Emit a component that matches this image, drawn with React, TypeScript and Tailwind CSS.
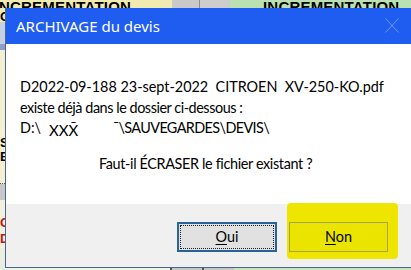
import React from "react";

const ui = { fontFamily: '"Noto Sans", "Open Sans", sans-serif' };
const body = { fontFamily: 'Lato, "Noto Sans", sans-serif' };
const bg = { fontFamily: '"Liberation Sans", Arial, sans-serif' };

export default function App() {
  return (
    <div className="relative w-[411px] h-[270px] overflow-hidden bg-[#eef0e6]" style={bg}>
      {/* background application (behind the dialog) */}
      <div className="flex h-[8px] overflow-hidden">
        <div className="w-[172px] bg-[#f1ebb2] flex items-end overflow-hidden">
          <span className="text-[15px] font-bold leading-none text-black -ml-[1px] mb-[-6px] tracking-[0.2px]">NCREMENTATION</span>
        </div>
        <div className="w-[28px] bg-[#c9c9c9] border-r border-[#8d8d8d]" />
        <div className="w-[30px] bg-[#cdcdcd]" />
        <div className="flex-1 bg-[#b9e1b2] flex items-end overflow-hidden pl-[33px]">
          <span className="text-[15px] font-bold leading-none text-black mb-[-6px] whitespace-nowrap tracking-[0.2px]">INCREMENTATION</span>
        </div>
      </div>
      <div className="flex h-[262px]">
        <div className="w-[5px] flex flex-col overflow-hidden text-[13px] font-bold leading-none">
          <div className="h-[14px] bg-[#f1ebb2] pt-[2px] text-black">C</div>
          <div className="h-[22px] bg-[#c4d0e4]" />
          <div className="h-[6px] bg-[#8aa0c8]" />
          <div className="h-[86px] bg-[#f3efcf]" />
          <div className="h-[14px] bg-[#f3efcf] text-black">S</div>
          <div className="h-[14px] bg-[#f3efcf] text-black">E</div>
          <div className="h-[20px] bg-[#f3efcf] border-b border-dotted border-[#555]" />
          <div className="h-[16px] bg-[#c8c8c8]" />
          <div className="h-[16px] bg-[#f3f0e0]" />
          <div className="h-[16px] bg-[#f3f0e0] text-[#c01818]">C</div>
          <div className="h-[16px] bg-[#f3f0e0] text-[#c01818]">D</div>
          <div className="flex-1 bg-[#e8efe0]" />
        </div>
        <div className="flex-1 flex flex-col">
          <div className="flex-1" />
          <div className="h-[3px] flex">
            <div className="w-[165px] bg-[#eef2e8]" />
            <div className="w-[2px] bg-[#555]" />
            <div className="w-[30px] bg-[#c6c6c6]" />
            <div className="w-[2px] bg-[#555]" />
            <div className="w-[30px] bg-[#c6c6c6]" />
            <div className="flex-1 bg-[#c8e4c0]" />
          </div>
        </div>
      </div>

      {/* dialog window */}
      <div
        className="absolute left-[5px] top-[8px] w-[420px] h-[260px] flex flex-col border-l border-b border-[#4a6590] bg-white"
        style={ui}
      >
        <div className="h-[36px] bg-[#1f5cf0] flex items-center pl-[10px] relative shrink-0">
          <span className="text-white text-[15px] leading-none">ARCHIVAGE du devis</span>
          <svg className="absolute left-[379px] top-[10px]" width="14" height="15" viewBox="0 0 14 15">
            <path d="M0.5 0.5 L13.5 14.5 M13.5 0.5 L0.5 14.5" stroke="#6f98f2" strokeWidth="1" fill="none" />
          </svg>
        </div>
        <div className="h-[160px] bg-white text-[14.4px] text-black leading-[20.5px] pl-[14px] pt-[33px] shrink-0" style={body}>
          <div className="whitespace-pre">D2022-09-188 23-sept-2022  CITROEN  XV-250-KO.pdf</div>
          <div className="whitespace-pre tracking-[-0.45px]">existe déjà dans le dossier ci-dessous :</div>
          <div className="flex items-end whitespace-pre">
            <span>D:\</span>
            <span className="ml-[8px] text-[15px] translate-y-[2px]">XXX̄</span>
            <span className="ml-[35px] tracking-[-0.6px]">¯\SAUVEGARDES\DEVIS\</span>
          </div>
          <div className="mt-[15px] pl-[79px] tracking-[-0.35px]">Faut-il ÉCRASER le fichier existant ?</div>
        </div>
        <div className="flex-1 bg-[#f0f0f0] flex items-start pt-[18px] pl-[171px] gap-[12px]" style={body}>
          <button className="w-[100px] h-[30px] border-2 border-[#27649a] bg-[#e1e1e1] p-[1px] text-[14.4px] text-black leading-none">
            <span className="flex h-full w-full items-center justify-center border border-dotted border-[#222]">
              <span><span className="underline underline-offset-2">O</span>ui</span>
            </span>
          </button>
          <div className="relative isolate">
            <span className="absolute -left-[2px] -top-[19px] -right-[10px] -bottom-[7px] bg-[#eee600] rounded-[4px] -z-10" />
            <button className="w-[99px] h-[30px] border border-[#a9a545] bg-[#ebe300] text-[14.4px] text-black leading-none flex items-center justify-center">
              <span><span className="underline underline-offset-2">N</span>on</span>
            </button>
          </div>
        </div>
      </div>
    </div>
  );
}
